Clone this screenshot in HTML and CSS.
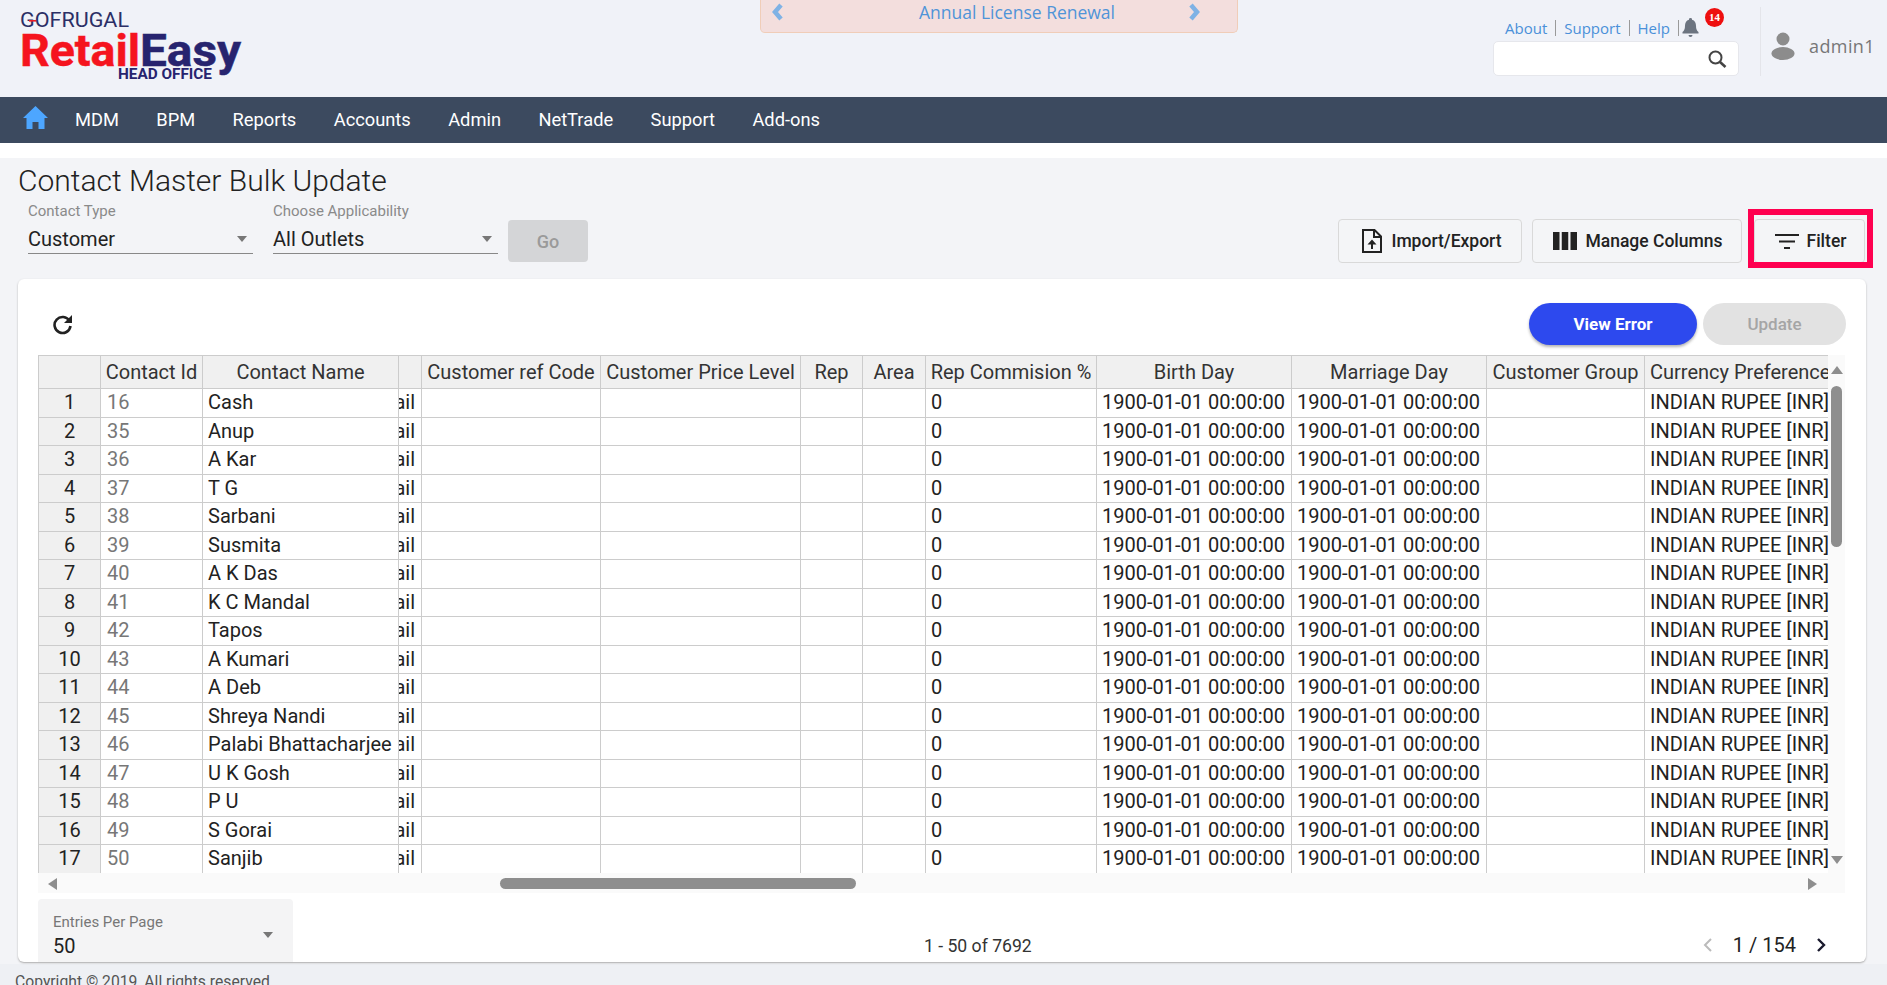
FILE: index.html
```html
<!DOCTYPE html>
<html lang="en">
<head>
<meta charset="utf-8">
<title>Contact Master Bulk Update</title>
<link rel="stylesheet" href="styles.css">
</head>
<body>
<header class="top">
  <svg class="logo" width="260" height="97" viewBox="0 0 260 97">
    <text x="20" y="27" class="l-go" textLength="109" lengthAdjust="spacingAndGlyphs">GOFRUGAL</text>
    <rect x="29" y="20" width="7" height="1.6" fill="#ed1c24"/>
    <text x="20" y="66" class="l-re" textLength="120" lengthAdjust="spacingAndGlyphs">Retail</text>
    <text x="140" y="66" class="l-ea" textLength="101" lengthAdjust="spacingAndGlyphs">Easy</text>
    <text x="118" y="79" class="l-ho" textLength="94" lengthAdjust="spacingAndGlyphs">HEAD OFFICE</text>
  </svg>
  <div class="banner">
    <svg class="chev" width="13" height="18" viewBox="0 0 13 18"><path d="M10 2 4 9l6 7" fill="none" stroke="#7fb2e5" stroke-width="4.5"/></svg>
    <span class="b-text">Annual License Renewal</span>
    <svg class="chev" width="13" height="18" viewBox="0 0 13 18"><path d="M3 2l6 7-6 7" fill="none" stroke="#7fb2e5" stroke-width="4.5"/></svg>
  </div>
  <div class="tools">
    <div class="links">
      <a class="lnk">About</a><a class="lnk">Support</a><a class="lnk">Help</a>
      <span class="bell">
        <svg width="17" height="20" viewBox="0 0 17 20"><path d="M8.500 0a1.500 1.500 0 0 1 1.500 1.700c2.800.7 4 3.100 4 6 0 3.300.8 4.800 2.500 6.300v1.500H.5V14c1.700-1.500 2.500-3 2.500-6.300 0-2.900 1.200-5.300 4-6A1.500 1.500 0 0 1 8.500 0zM6.500 17h4a2 2 0 0 1-4 0z" fill="#6c7480"/></svg>
        <b class="badge">14</b>
      </span>
    </div>
    <div class="search">
      <svg width="20" height="18" viewBox="0 0 20 18"><circle cx="8.500" cy="7.500" r="6" fill="none" stroke="#444" stroke-width="2"/><path d="M13 12l5.500 5" stroke="#444" stroke-width="2.600"/></svg>
    </div>
  </div>
  <div class="user">
    <svg width="24" height="28" viewBox="0 0 24 28"><circle cx="12" cy="7" r="6.500" fill="#8c8c8c"/><ellipse cx="12" cy="21.500" rx="11.500" ry="6.500" fill="#8c8c8c"/></svg>
    <span class="uname">admin1</span>
  </div>
</header>

<nav class="nav">
  <svg class="home" width="25" height="23" viewBox="0 0 25 23"><path d="M12.500 0 25 12h-3.500v11h-6v-7h-6v7h-6V12H0z" fill="#4da6ff"/></svg>
  <a>MDM</a><a>BPM</a><a>Reports</a><a>Accounts</a><a>Admin</a><a>NetTrade</a><a>Support</a><a>Add-ons</a>
</nav>
<div class="gap"></div>

<main class="main">
  <h1 class="title">Contact Master Bulk Update</h1>
  <div class="controls">
    <div class="sel">
      <label>Contact Type</label>
      <div class="val"><span>Customer</span><i class="caret"></i></div>
    </div>
    <div class="sel">
      <label>Choose Applicability</label>
      <div class="val"><span>All Outlets</span><i class="caret"></i></div>
    </div>
    <button class="go">Go</button>
    <div class="actions">
      <button class="btn imp">
        <svg width="20" height="24" viewBox="0 0 20 24"><path d="M1 1h11.500L19 7.500V23H1z" fill="none" stroke="#222" stroke-width="2"/><path d="M12 1v7h7" fill="none" stroke="#222" stroke-width="2"/><path d="M10 10.500l-4.500 5H9V20h2v-4.500h3.500z" fill="#222"/></svg>
        Import/Export
      </button>
      <button class="btn man">
        <svg width="24" height="18" viewBox="0 0 24 18"><path d="M0 0h6.500v18H0zM8.750 0h6.500v18h-6.500zM17.500 0H24v18h-6.500z" fill="#222"/></svg>
        Manage Columns
      </button>
      <div class="filter-wrap">
        <button class="btn fil">
          <svg width="24" height="15" viewBox="0 0 24 15"><path d="M0 1h24M4 7.500h16M9 14h6" stroke="#222" stroke-width="2.200"/></svg>
          Filter
        </button>
        <span class="mark"></span>
      </div>
    </div>
  </div>

  <section class="card">
    <div class="bar">
      <svg class="refresh" width="21" height="21" viewBox="0 0 21 21"><path d="M17.500 7A8 8 0 1 0 18.500 12" fill="none" stroke="#222" stroke-width="2.600"/><path d="M20 1v8h-8z" fill="#222"/></svg>
      <button class="pill view">View Error</button>
      <button class="pill upd">Update</button>
    </div>

    <div class="gridbox">
      <div class="sheet">
        <div class="tr hd"><span class="rn"></span><span class="c">Contact Id</span><span class="c">Contact Name</span><span></span><span class="c">Customer ref Code</span><span class="c">Customer Price Level</span><span class="c">Rep</span><span class="c">Area</span><span class="c">Rep Commision %</span><span class="c">Birth Day</span><span class="c">Marriage Day</span><span class="c">Customer Group</span><span class="l">Currency Preference</span></div>
        <div class="tr"><span class="rn">1</span><span class="id">16</span><span>Cash</span><span class="cut"><em>Retail</em></span><span></span><span></span><span></span><span></span><span>0</span><span>1900-01-01 00:00:00</span><span>1900-01-01 00:00:00</span><span></span><span>INDIAN RUPEE [INR]</span></div>
        <div class="tr"><span class="rn">2</span><span class="id">35</span><span>Anup</span><span class="cut"><em>Retail</em></span><span></span><span></span><span></span><span></span><span>0</span><span>1900-01-01 00:00:00</span><span>1900-01-01 00:00:00</span><span></span><span>INDIAN RUPEE [INR]</span></div>
        <div class="tr"><span class="rn">3</span><span class="id">36</span><span>A Kar</span><span class="cut"><em>Retail</em></span><span></span><span></span><span></span><span></span><span>0</span><span>1900-01-01 00:00:00</span><span>1900-01-01 00:00:00</span><span></span><span>INDIAN RUPEE [INR]</span></div>
        <div class="tr"><span class="rn">4</span><span class="id">37</span><span>T G</span><span class="cut"><em>Retail</em></span><span></span><span></span><span></span><span></span><span>0</span><span>1900-01-01 00:00:00</span><span>1900-01-01 00:00:00</span><span></span><span>INDIAN RUPEE [INR]</span></div>
        <div class="tr"><span class="rn">5</span><span class="id">38</span><span>Sarbani</span><span class="cut"><em>Retail</em></span><span></span><span></span><span></span><span></span><span>0</span><span>1900-01-01 00:00:00</span><span>1900-01-01 00:00:00</span><span></span><span>INDIAN RUPEE [INR]</span></div>
        <div class="tr"><span class="rn">6</span><span class="id">39</span><span>Susmita</span><span class="cut"><em>Retail</em></span><span></span><span></span><span></span><span></span><span>0</span><span>1900-01-01 00:00:00</span><span>1900-01-01 00:00:00</span><span></span><span>INDIAN RUPEE [INR]</span></div>
        <div class="tr"><span class="rn">7</span><span class="id">40</span><span>A K Das</span><span class="cut"><em>Retail</em></span><span></span><span></span><span></span><span></span><span>0</span><span>1900-01-01 00:00:00</span><span>1900-01-01 00:00:00</span><span></span><span>INDIAN RUPEE [INR]</span></div>
        <div class="tr"><span class="rn">8</span><span class="id">41</span><span>K C Mandal</span><span class="cut"><em>Retail</em></span><span></span><span></span><span></span><span></span><span>0</span><span>1900-01-01 00:00:00</span><span>1900-01-01 00:00:00</span><span></span><span>INDIAN RUPEE [INR]</span></div>
        <div class="tr"><span class="rn">9</span><span class="id">42</span><span>Tapos</span><span class="cut"><em>Retail</em></span><span></span><span></span><span></span><span></span><span>0</span><span>1900-01-01 00:00:00</span><span>1900-01-01 00:00:00</span><span></span><span>INDIAN RUPEE [INR]</span></div>
        <div class="tr"><span class="rn">10</span><span class="id">43</span><span>A Kumari</span><span class="cut"><em>Retail</em></span><span></span><span></span><span></span><span></span><span>0</span><span>1900-01-01 00:00:00</span><span>1900-01-01 00:00:00</span><span></span><span>INDIAN RUPEE [INR]</span></div>
        <div class="tr"><span class="rn">11</span><span class="id">44</span><span>A Deb</span><span class="cut"><em>Retail</em></span><span></span><span></span><span></span><span></span><span>0</span><span>1900-01-01 00:00:00</span><span>1900-01-01 00:00:00</span><span></span><span>INDIAN RUPEE [INR]</span></div>
        <div class="tr"><span class="rn">12</span><span class="id">45</span><span>Shreya Nandi</span><span class="cut"><em>Retail</em></span><span></span><span></span><span></span><span></span><span>0</span><span>1900-01-01 00:00:00</span><span>1900-01-01 00:00:00</span><span></span><span>INDIAN RUPEE [INR]</span></div>
        <div class="tr"><span class="rn">13</span><span class="id">46</span><span>Palabi Bhattacharjee</span><span class="cut"><em>Retail</em></span><span></span><span></span><span></span><span></span><span>0</span><span>1900-01-01 00:00:00</span><span>1900-01-01 00:00:00</span><span></span><span>INDIAN RUPEE [INR]</span></div>
        <div class="tr"><span class="rn">14</span><span class="id">47</span><span>U K Gosh</span><span class="cut"><em>Retail</em></span><span></span><span></span><span></span><span></span><span>0</span><span>1900-01-01 00:00:00</span><span>1900-01-01 00:00:00</span><span></span><span>INDIAN RUPEE [INR]</span></div>
        <div class="tr"><span class="rn">15</span><span class="id">48</span><span>P U</span><span class="cut"><em>Retail</em></span><span></span><span></span><span></span><span></span><span>0</span><span>1900-01-01 00:00:00</span><span>1900-01-01 00:00:00</span><span></span><span>INDIAN RUPEE [INR]</span></div>
        <div class="tr"><span class="rn">16</span><span class="id">49</span><span>S Gorai</span><span class="cut"><em>Retail</em></span><span></span><span></span><span></span><span></span><span>0</span><span>1900-01-01 00:00:00</span><span>1900-01-01 00:00:00</span><span></span><span>INDIAN RUPEE [INR]</span></div>
        <div class="tr"><span class="rn">17</span><span class="id">50</span><span>Sanjib</span><span class="cut"><em>Retail</em></span><span></span><span></span><span></span><span></span><span>0</span><span>1900-01-01 00:00:00</span><span>1900-01-01 00:00:00</span><span></span><span>INDIAN RUPEE [INR]</span></div>
      </div>
      <div class="vbar">
        <i class="a-up"></i>
        <i class="vthumb"></i>
        <i class="a-down"></i>
      </div>
      <div class="hbar">
        <i class="a-left"></i>
        <i class="hthumb"></i>
        <i class="a-right"></i>
      </div>
    </div>

    <div class="foot">
      <div class="entries">
        <div class="e-text"><label>Entries Per Page</label><span>50</span></div>
        <i class="caret"></i>
      </div>
      <span class="count">1 - 50 of 7692</span>
      <div class="pager">
        <svg width="10" height="14" viewBox="0 0 10 14"><path d="M8 1 2 7l6 6" fill="none" stroke="#bbb" stroke-width="2"/></svg>
        <span>1 / 154</span>
        <svg width="10" height="14" viewBox="0 0 10 14"><path d="M2 1l6 6-6 6" fill="none" stroke="#1a1a2e" stroke-width="2.400"/></svg>
      </div>
    </div>
  </section>
</main>

<footer class="copy">Copyright © 2019, All rights reserved</footer>
</body>
</html>
```
FILE: styles.css
```css
* { box-sizing: border-box; }
html, body { margin: 0; height: 985px; overflow: hidden; }
body {
  display: flex;
  flex-direction: column;
  font-family: Roboto, "Liberation Sans", sans-serif;
  color: #222;
  background: #eef0f4;
}
button { font-family: inherit; }

/* header */
.top { height: 97px; flex: none; display: flex; align-items: flex-start; background: #f0f2f8; }
.logo { flex: none; display: block; }
.logo text { font-family: Roboto, sans-serif; }
.l-go { font-size: 20px; fill: #2b2f66; }
.l-re { font-size: 44px; font-weight: 700; fill: #f5141e; stroke: #f5141e; stroke-width: .5px; }
.l-ea { font-size: 44px; font-weight: 700; fill: #27246f; stroke: #27246f; stroke-width: .5px; }
.l-ho { font-size: 14px; font-weight: 700; fill: #27246f; }

.banner {
  flex: none;
  margin-left: 500px;
  width: 478px;
  height: 33px;
  padding: 0 36px 9px 10px;
  display: flex;
  align-items: center;
  justify-content: space-between;
  background: #f3dedd;
  border: 1px solid #f0cdb8;
  border-top: 0;
  border-radius: 0 0 5px 5px;
  font-family: "Open Sans", sans-serif;
  font-size: 17.500px;
  color: #4f94d8;
}
.b-text { margin-left: 62px; }
.chev { flex: none; }

.tools { flex: none; margin-left: 255px; width: 246px; }
.links { height: 41px; padding: 14px 0 0 12px; display: flex; align-items: center; font-family: "Open Sans", sans-serif; font-size: 15px; color: #4a90d9; }
.lnk { padding-right: 8px; margin-right: 8px; border-right: 1px solid #9a9a9a; line-height: 16px; }
.bell { position: relative; margin-left: -5px; display: block; height: 20px; }
.bell svg { display: block; }
.badge {
  position: absolute;
  left: 23px;
  top: -10px;
  width: 19px;
  height: 19px;
  border-radius: 50%;
  background: #ee0f0f;
  color: #fff;
  font: 700 11px/19px "Liberation Serif", serif;
  text-align: center;
}
.search {
  height: 35px;
  display: flex;
  align-items: center;
  justify-content: flex-end;
  padding-right: 11px;
  background: #fff;
  border: 1px solid #e6e7ec;
  border-radius: 5px;
}
.user {
  flex: none;
  margin: 7px 0 0 21px;
  height: 69px;
  width: 127px;
  padding: 18px 0 0 10px;
  display: flex;
  align-items: flex-start;
  gap: 14px;
  border-left: 1px solid #e4e5ea;
  font-family: "Open Sans", sans-serif;
}
.uname { font-size: 18px; line-height: 42px; color: #777; letter-spacing: .4px; }
.user svg { margin-top: 7px; flex: none; }

/* nav */
.nav {
  height: 46px;
  flex: none;
  display: flex;
  align-items: center;
  gap: 37.400px;
  padding: 0 0 2px 23px;
  background: #3c4a5f;
  color: #fff;
  font-size: 18.300px;
}
.home { margin-right: -10.400px; margin-top: -3px; }
.gap { height: 15px; flex: none; background: #fff; }

/* main */
.main { flex: none; height: 806px; padding: 0 21px 0 18px; background: #f3f4f7; }
.title { margin: 0; padding-top: 1px; font-size: 30px; font-weight: 300; line-height: 44px; height: 44px; color: #222; }
.controls { height: 61px; display: flex; align-items: flex-end; }
.sel { width: 225px; margin: 0 0 9px 10px; }
.sel + .sel { margin-left: 20px; }
.sel label { display: block; height: 18px; font-size: 15px; line-height: 18px; color: #8a8a8a; }
.val {
  margin-top: 3px;
  height: 31px;
  padding: 1px 6px 0 0;
  display: flex;
  align-items: center;
  justify-content: space-between;
  border-bottom: 1px solid #888;
  font-size: 20px;
  color: #222;
}
.caret { display: block; width: 0; height: 0; border: solid transparent; border-width: 6px 5.500px 0; border-top-color: #777; }
.go {
  width: 80px;
  height: 42px;
  margin: 0 0 1px 10px;
  border: 0;
  border-radius: 4px;
  background: #d4d5d7;
  color: #9a9a9a;
  font-size: 18px;
  font-weight: 500;
}
.actions { margin: 0 1px 0 auto; display: flex; gap: 10px; }
.btn {
  height: 44px;
  display: flex;
  align-items: center;
  justify-content: center;
  gap: 9px;
  padding: 0;
  background: #f4f5f7;
  border: 1px solid #d9d9d9;
  border-radius: 4px;
  font-size: 17.500px;
  font-weight: 500;
  color: #222;
}
.imp { width: 184px; padding-left: 4px; }
.man { width: 210px; gap: 8px; padding-left: 2px; }
.filter-wrap { position: relative; margin-left: 2px; }
.fil { width: 111px; gap: 8px; padding-left: 2px; }
.mark { position: absolute; top: -10px; right: -8px; bottom: -5px; left: -6px; border: 6px solid #ff0050; pointer-events: none; }

/* card */
.card {
  margin-top: 16px;
  height: 683px;
  padding: 24px 20px 0;
  background: #fff;
  border-radius: 6px;
  box-shadow: 0 1px 2px #aaa;
  overflow: hidden;
}
.bar { height: 42px; display: flex; align-items: center; gap: 6px; }
.refresh { margin: 0 auto 0 14px; }
.pill { height: 42px; border: 0; border-radius: 21px; font-size: 17px; font-weight: 700; }
.view { width: 168px; background: #2d49ee; color: #fff; box-shadow: 0 2px 3px rgba(0,0,0,.3); }
.upd { width: 143px; background: #e2e2e2; color: #a5a5a5; font-weight: 500; }

.gridbox { margin: 10px 1px 0 0; display: grid; grid-template-columns: 1790px 17px; grid-template-rows: 517.500px 20px; }
.sheet { border-top: 1px solid #ccc; overflow: hidden; }
.tr {
  display: grid;
  grid-template-columns: 63px 102px 196px 23px 179px 200px 62px 63px 171px 195px 195px 158px 183px;
  height: 28.500px;
  font-size: 20px;
}
.tr > span {
  display: block;
  padding-left: 5px;
  line-height: 26px;
  white-space: nowrap;
  overflow: hidden;
  border-right: 1px solid #ccc;
  border-bottom: 1px solid #ccc;
  color: #222;
}
.tr > span:last-child { border-right: 0; }
.tr > span:first-child { border-left: 1px solid #ccc; }
.tr.hd { height: 33px; }
.tr.hd > span { background: #f0f0f0; line-height: 32px; padding: 0; color: #333; }
.tr.hd > .c { text-align: center; }
.tr.hd > .l { padding-left: 5px; }
.tr > .rn { background: #f0f0f0; padding: 0; text-align: center; }
.tr > .id { color: #777; padding-left: 6px; }
.tr > .cut { padding: 0 6px 0 0; display: flex; justify-content: flex-end; }
.cut em { font-style: normal; flex: none; }

.vbar { display: flex; flex-direction: column; align-items: center; padding-top: 11px; background: #fafafa; }
.a-up { width: 0; height: 0; border: solid transparent; border-width: 0 6px 8px; border-bottom-color: #8e8e8e; }
.vthumb { width: 11px; height: 161px; margin-top: 12px; border-radius: 6px; background: #8e8e8e; }
.a-down { width: 0; height: 0; margin-top: auto; margin-bottom: 9px; border: solid transparent; border-width: 8px 6px 0; border-top-color: #8e8e8e; }
.hbar { grid-column: 1 / 3; display: flex; align-items: center; padding: 2px 28px 0 10px; background: #fafafa; }
.a-left { width: 0; height: 0; border: solid transparent; border-width: 6px 9px 6px 0; border-right-color: #8e8e8e; }
.hthumb { width: 356px; height: 11px; margin-left: 443px; border-radius: 6px; background: #8e8e8e; }
.a-right { width: 0; height: 0; margin-left: auto; border: solid transparent; border-width: 6px 0 6px 9px; border-left-color: #8e8e8e; }

.foot { margin-top: 6px; height: 63px; display: flex; align-items: flex-end; font-size: 20px; }
.entries {
  width: 255px;
  height: 63px;
  flex: none;
  padding: 13px 20px 0 15px;
  display: flex;
  justify-content: space-between;
  align-items: center;
  background: #f4f4f5;
  border-radius: 4px 4px 0 0;
}
.e-text label { display: block; font-size: 15px; line-height: 18px; color: #777; margin-top: -2px; }
.e-text span { display: block; line-height: 24px; margin-top: 3px; color: #222; }
.entries .caret { margin-top: -4px; }
.count { margin: 0 0 4px 631px; line-height: 24px; font-size: 17.600px; color: #333; }
.pager { margin: 0 20px 5px auto; display: flex; align-items: center; gap: 20px; line-height: 24px; }

/* footer */
.copy { flex: none; padding: 9px 0 0 15px; font-size: 15.700px; line-height: 18px; color: #555; }
```
